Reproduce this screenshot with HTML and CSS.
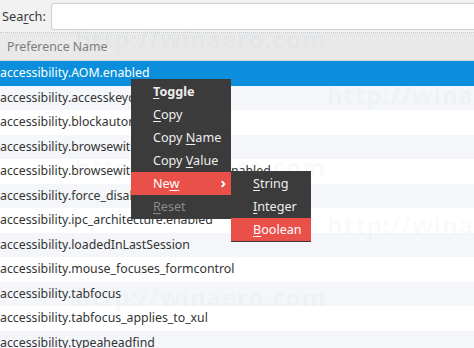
FILE: index.html
```html
<!DOCTYPE html>
<html lang="en">
<head>
    <meta charset="UTF-8">
    <title>about:config</title>
    <link rel="stylesheet" href="styles.css">
</head>
<body>
    <div class="search-bar">
        <label class="search-label" for="search">Sea<u>r</u>ch:</label>
        <input type="text" id="search" class="search-input">
    </div>

    <div class="prefs">
        <div class="pref-header">Preference Name</div>
        <div class="pref-row selected">accessibility.AOM.enabled</div>
        <div class="pref-row">accessibility.accesskeycausesactivation</div>
        <div class="pref-row">accessibility.blockautorefresh</div>
        <div class="pref-row">accessibility.browsewithcaret</div>
        <div class="pref-row">accessibility.browsewithcaret_shortcut.enabled</div>
        <div class="pref-row">accessibility.force_disabled</div>
        <div class="pref-row">accessibility.ipc_architecture.enabled</div>
        <div class="pref-row">accessibility.loadedInLastSession</div>
        <div class="pref-row">accessibility.mouse_focuses_formcontrol</div>
        <div class="pref-row">accessibility.tabfocus</div>
        <div class="pref-row">accessibility.tabfocus_applies_to_xul</div>
        <div class="pref-row">accessibility.typeaheadfind</div>
    </div>

    <div class="watermark wm-1">http://winaero.com</div>
    <div class="watermark wm-2">http://winaero.com</div>
    <div class="watermark wm-3">http://winaero.com</div>
    <div class="watermark wm-4">http://winaero.com</div>
    <div class="watermark wm-5">http://winaero.com</div>

    <div class="menu context-menu">
        <div class="menu-item bold"><u>T</u>oggle</div>
        <div class="menu-item"><u>C</u>opy</div>
        <div class="menu-item">Copy <u>N</u>ame</div>
        <div class="menu-item">Copy <u>V</u>alue</div>
        <div class="menu-item active">Ne<u>w</u><span class="chevron">&#8250;</span></div>
        <div class="menu-item disabled"><u>R</u>eset</div>
    </div>

    <div class="menu sub-menu">
        <div class="menu-item"><u>S</u>tring</div>
        <div class="menu-item"><u>I</u>nteger</div>
        <div class="menu-item active"><u>B</u>oolean</div>
    </div>
</body>
</html>
```

FILE: styles.css
```css
body {
    margin: 0;
    font-family: "Noto Sans", "Open Sans", sans-serif;
    font-size: 12.3px;
    color: #333;
    background: #fff;
    overflow: hidden;
}
u {
    text-decoration: underline;
    text-underline-offset: 2px;
}
.search-bar {
    display: flex;
    align-items: center;
    gap: 5px;
    height: 33px;
    padding-left: 2px;
    background: #f2f2f2;
    border-bottom: 1px dotted #b9c9d6;
    box-sizing: border-box;
}
.search-label {
    font-size: 12.8px;
    color: #3a3a3a;
}
.search-input {
    flex: 1;
    height: 27px;
    margin: 0;
    border: 1px solid #cfcfcf;
    border-right: none;
    border-radius: 3px 0 0 3px;
    background: #fff;
    box-sizing: border-box;
}
.pref-header {
    height: 28px;
    line-height: 27px;
    padding-left: 7px;
    color: #7c7c7c;
    background: #e9e9e9;
    border-bottom: 1px solid #d6d6d6;
    box-sizing: border-box;
}
.pref-row {
    height: 24.5px;
    line-height: 24.5px;
    white-space: nowrap;
    color: #333;
}
.pref-row:nth-child(odd) {
    background: #f4f6f9;
}
.pref-row.selected {
    background: #0b8fdc;
    color: #fff;
}
.watermark {
    position: absolute;
    font-size: 24px;
    font-weight: bold;
    letter-spacing: 1px;
    color: rgba(160, 175, 190, 0.07);
    white-space: nowrap;
}
.wm-1 { left: 75px; top: 22px; }
.wm-2 { left: 327px; top: 78px; }
.wm-3 { left: 75px; top: 150px; }
.wm-4 { left: 327px; top: 208px; }
.wm-5 { left: 75px; top: 280px; }
.menu {
    position: absolute;
    background: #3b3b3b;
    padding: 1px 0;
    color: #eeeeee;
    font-size: 12.6px;
}
.context-menu {
    left: 131px;
    top: 79px;
    width: 100px;
}
.sub-menu {
    left: 231px;
    top: 171px;
    width: 80px;
}
.menu-item {
    position: relative;
    height: 23px;
    line-height: 23px;
    padding-left: 22px;
    white-space: nowrap;
}
.menu-item.bold {
    font-weight: bold;
}
.menu-item.active {
    background: #e9504a;
    color: #fff;
}
.menu-item.disabled {
    color: #8a8a8a;
}
.chevron {
    position: absolute;
    right: 5px;
    top: -1px;
    font-size: 15px;
    font-weight: bold;
}
```
